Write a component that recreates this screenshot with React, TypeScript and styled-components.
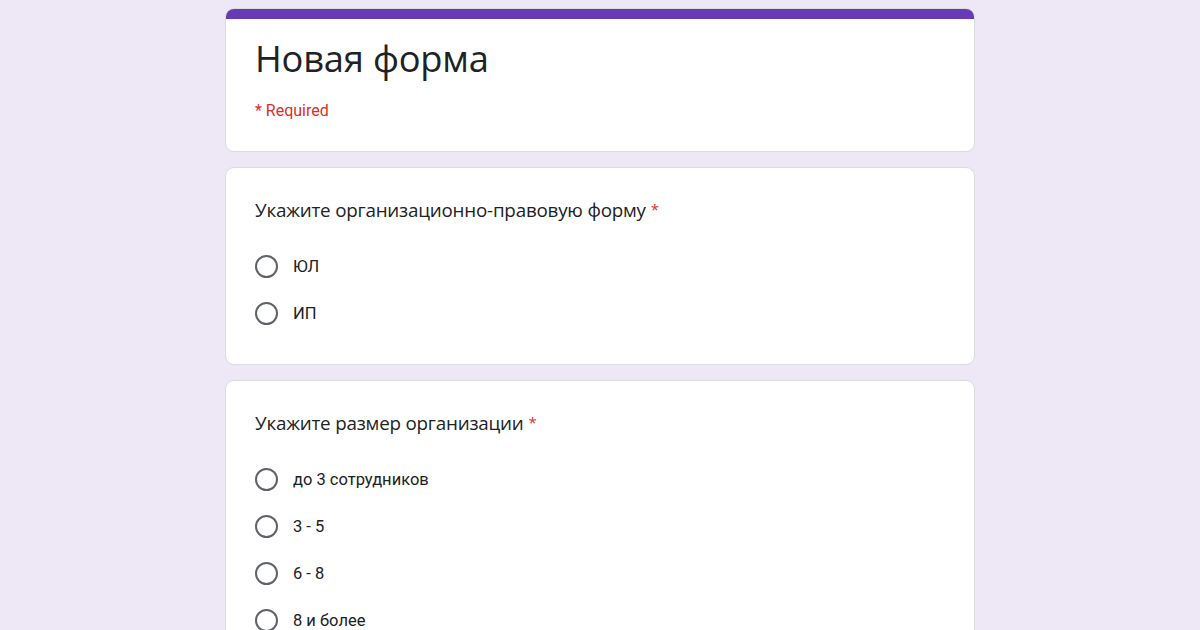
import React from 'react';
import styled, { createGlobalStyle } from 'styled-components';

const GlobalStyle = createGlobalStyle`
  body {
    margin: 0;
    background-color: #ede7f6;
    font-family: Roboto, 'Liberation Sans', sans-serif;
    color: #202124;
  }
`;

const Page = styled.div`
  display: flex;
  flex-direction: column;
  gap: 15px;
  width: 750px;
  margin: 8px auto 0;
`;

const Card = styled.div`
  background-color: #fff;
  border: 1px solid #dadce0;
  border-radius: 9px;
  overflow: hidden;
`;

const TopBar = styled.div`
  height: 11px;
  margin: -1px -1px 0;
  background-color: #673ab7;
`;

const HeaderBody = styled.div`
  padding: 17px 29px 30px;
`;

const Title = styled.h1`
  margin: 0;
  font-family: 'Open Sans', Roboto, sans-serif;
  font-weight: 400;
  font-size: 36.3px;
  line-height: 45px;
  letter-spacing: -0.2px;
  color: #202124;
`;

const RequiredNote = styled.div`
  margin-top: 20px;
  font-size: 16px;
  line-height: 20px;
  color: #d93025;
`;

const QuestionBody = styled.div`
  padding: 29px 29px 27px;
`;

const QuestionTitle = styled.div`
  font-family: 'Open Sans', Roboto, sans-serif;
  font-size: 18.8px;
  line-height: 24px;
  letter-spacing: -0.2px;
  color: #202124;
  margin-bottom: 21px;
`;

const Star = styled.span`
  color: #d93025;
  margin-left: 5px;
  font-size: 15px;
  vertical-align: 2px;
`;

const OptionList = styled.div`
  display: flex;
  flex-direction: column;
`;

const OptionRow = styled.label`
  display: flex;
  align-items: center;
  gap: 15px;
  height: 47px;
  font-size: 16.5px;
  color: #202124;
`;

const Radio = styled.span`
  box-sizing: border-box;
  width: 23px;
  height: 23px;
  border: 2.3px solid #5f6368;
  border-radius: 50%;
  flex-shrink: 0;
`;

type Question = { title: string; options: string[] };

const questions: Question[] = [
  { title: 'Укажите организационно-правовую форму', options: ['ЮЛ', 'ИП'] },
  {
    title: 'Укажите размер организации',
    options: ['до 3 сотрудников', '3 - 5', '6 - 8', '8 и более'],
  },
];

export default function App() {
  return (
    <>
      <GlobalStyle />
      <Page>
        <Card>
          <TopBar />
          <HeaderBody>
            <Title>Новая форма</Title>
            <RequiredNote>* Required</RequiredNote>
          </HeaderBody>
        </Card>
        {questions.map((q) => (
          <Card key={q.title}>
            <QuestionBody>
              <QuestionTitle>
                {q.title}
                <Star>*</Star>
              </QuestionTitle>
              <OptionList>
                {q.options.map((o) => (
                  <OptionRow key={o}>
                    <Radio />
                    {o}
                  </OptionRow>
                ))}
              </OptionList>
            </QuestionBody>
          </Card>
        ))}
      </Page>
    </>
  );
}
